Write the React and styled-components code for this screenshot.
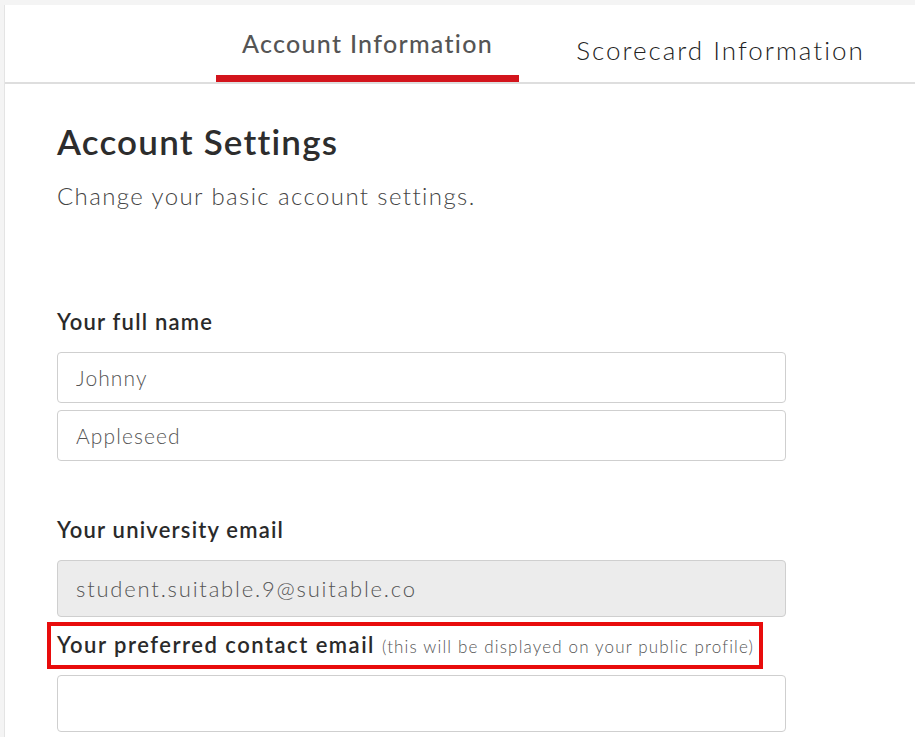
import React from 'react'
import styled, { createGlobalStyle } from 'styled-components'

const GlobalStyle = createGlobalStyle`
    html, body {
        margin: 0;
        padding: 0;
        background: #f4f4f4;
    }
    body {
        font-family: Lato, "Open Sans", sans-serif;
        color: #222;
    }
`

const Page = styled.div`
    width: 915px;
    height: 737px;
    overflow: hidden;
    padding-top: 5px;
    box-sizing: border-box;
`

const Card = styled.div`
    margin-left: 4px;
    width: 910px;
    height: 732px;
    background: #fff;
    border-left: 1px solid #e4e4e4;
`

const TabBar = styled.div`
    display: flex;
    align-items: stretch;
    height: 77px;
    border-bottom: 2px solid #dedede;
    padding-left: 211px;
    box-sizing: border-box;
    height: 79px;
    overflow: hidden;
`

const Tab = styled.div`
    position: relative;
    flex-shrink: 0;
    display: flex;
    justify-content: center;
    align-items: center;
    width: ${({ $width }) => $width}px;
    padding-top: 12px;
    padding-bottom: ${({ $active }) => ($active ? 14 : 0)}px;
    box-sizing: border-box;
    font-size: ${({ $active }) => ($active ? 25 : 26)}px;
    font-weight: ${({ $active }) => ($active ? 500 : 300)};
    letter-spacing: ${({ $active }) => ($active ? 1.3 : 2)}px;
    color: ${({ $active }) => ($active ? '#555' : '#222')};
    white-space: nowrap;
    &::after {
        content: '';
        display: ${({ $active }) => ($active ? 'block' : 'none')};
        position: absolute;
        left: 0;
        right: 0;
        bottom: 0;
        height: 7px;
        background: #d3141c;
    }
`

const Content = styled.div`
    padding: 34px 0 0 52px;
    width: 729px;
`

const Heading = styled.h1`
    margin: 0;
    font-size: 35px;
    font-weight: 600;
    letter-spacing: 1.2px;
    color: #2d2d2d;
    line-height: 46px;
`

const Subtitle = styled.p`
    margin: 17px 0 0;
    font-size: 24px;
    font-weight: 300;
    color: #444;
    letter-spacing: 1.4px;
`

const Section = styled.div`
    display: flex;
    flex-direction: column;
    gap: 7px;
    margin-top: ${({ $top }) => $top}px;
`

const Label = styled.div`
    font-size: 22px;
    font-weight: 600;
    letter-spacing: ${({ $spacing }) => $spacing || 1.2}px;
    color: #2a2a2a;
    line-height: 28px;
    white-space: nowrap;
    margin-bottom: ${({ $gap }) => $gap || 0}px;
`

const Hint = styled.span`
    font-size: 17px;
    font-weight: 300;
    letter-spacing: 1.15px;
    color: #555;
`

const Highlight = styled.div`
    margin: -2px 0 -1px -10px;
    width: 716px;
    height: 47px;
    box-sizing: border-box;
    border: 4px solid #e80c0c;
    display: flex;
    align-items: center;
    padding-left: 6px;
`

const Input = styled.input`
    width: 729px;
    height: ${({ $h }) => $h || 51}px;
    box-sizing: border-box;
    border: 1px solid #cfcfcf;
    border-radius: 4px;
    padding: 0 18px;
    font-family: inherit;
    font-size: ${({ $size }) => $size || 21}px;
    font-weight: 300;
    letter-spacing: ${({ $size }) => ($size ? 1.8 : 1.1)}px;
    color: #555;
    background: ${({ disabled }) => (disabled ? '#ececec' : '#fff')};
    outline: none;
`

const App = () => {
    return (
        <>
            <GlobalStyle />
            <Page>
                <Card>
                    <TabBar>
                        <Tab $active $width={303}>Account Information</Tab>
                        <Tab $width={403}>Scorecard Information</Tab>
                    </TabBar>
                    <Content>
                        <Heading>Account Settings</Heading>
                        <Subtitle>Change your basic account settings.</Subtitle>

                        <Section $top={98}>
                            <Label $gap={9}>Your full name</Label>
                            <Input defaultValue="Johnny" />
                            <Input defaultValue="Appleseed" />
                        </Section>

                        <Section $top={55}>
                            <Label $gap={9}>Your university email</Label>
                            <Input $h={57} $size={22} disabled defaultValue="student.suitable.9@suitable.co" />
                            <Highlight>
                                <Label $spacing={1.5}>
                                    Your preferred contact email <Hint>(this will be displayed on your public profile)</Hint>
                                </Label>
                            </Highlight>
                            <Input $h={57} />
                        </Section>
                    </Content>
                </Card>
            </Page>
        </>
    )
}

export default App
